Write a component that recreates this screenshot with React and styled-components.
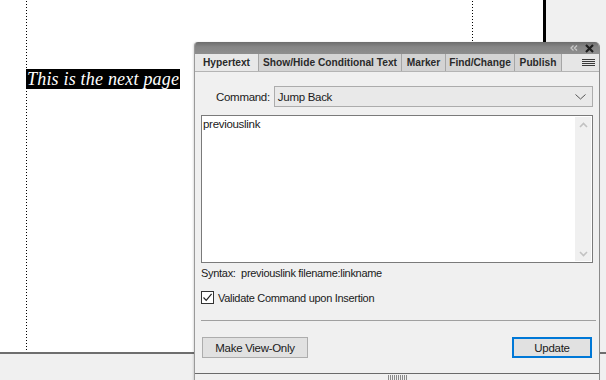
import React from "react";
import styled, { createGlobalStyle } from "styled-components";

const Global = createGlobalStyle`
  html, body { margin: 0; padding: 0; background: #f0f0f0; }
  body { width: 606px; height: 380px; overflow: hidden; }
`;

const Workspace = styled.div`
  position: relative;
  width: 606px;
  height: 380px;
  overflow: hidden;
  display: grid;
  grid-template-rows: 352px 2px 1fr;
  background: #efefef;
`;

const CanvasRow = styled.div`
  display: grid;
  grid-template-columns: 543px 3px 1fr;
`;

const Page = styled.div`
  background: #fff;
  display: grid;
  grid-template-columns: 26px 446px 1fr;
`;

const Guide = styled.div`
  background-image: ${(p) =>
    p.$dotted
      ? "linear-gradient(to bottom, #000 1px, transparent 1px)"
      : "none"};
  background-size: 1px 3px;
  background-repeat: repeat-y;
  background-position: 0 1px;
  padding-top: ${(p) => p.$top || 0}px;
`;

const Selected = styled.span`
  display: inline-block;
  background: #000;
  color: #fff;
  font-family: "Liberation Serif", "DejaVu Serif", serif;
  font-style: italic;
  font-size: 18px;
  line-height: 20px;
  height: 20px;
  padding: 0 1px 0 1px;
  letter-spacing: 0.2px;
`;

const PageEdge = styled.div`
  background: #000;
`;

const Pasteboard = styled.div`
  background: #f0f0f0;
`;

const BottomRule = styled.div`
  background: #6e6e6e;
`;

const Panel = styled.div`
  position: absolute;
  left: 194px;
  top: 42px;
  width: 406px;
  height: 346px;
  box-sizing: border-box;
  border-left: 1px solid #9a9a9a;
  border-right: 1px solid #8a8a8a;
  border-radius: 4px 5px 0 0;
  background: #f0f0f0;
  display: flex;
  flex-direction: column;
  font-family: "Liberation Sans", Arial, sans-serif;
  box-shadow: -1px 0 2px rgba(0,0,0,0.12);
  overflow: hidden;
`;

const TitleBar = styled.div`
  height: 12px;
  flex: none;
  background: linear-gradient(to bottom, #6c6c6c, #858585 40%, #8e8e8e);
  display: flex;
  justify-content: flex-end;
  align-items: center;
  gap: 7px;
  padding-right: 5px;
`;

const TabBar = styled.div`
  height: 18px;
  flex: none;
  display: flex;
  background: #e4e4e4;
  border-bottom: 1px solid #b4b4b4;
  box-sizing: border-box;
`;

const Tab = styled.div`
  width: ${(p) => p.$w}px;
  flex: none;
  box-sizing: border-box;
  display: flex;
  align-items: center;
  justify-content: center;
  font-size: 10.2px;
  font-weight: bold;
  color: #2a2a2a;
  background: ${(p) => (p.$active ? "#e8e8e8" : "#d3d3d3")};
  border-right: 1px solid #a6a6a6;
  white-space: nowrap;
`;

const TabFill = styled.div`
  flex: 1;
  display: flex;
  justify-content: flex-end;
  align-items: center;
  padding-right: 4px;
  background: #e6e6e6;
`;

const Body = styled.div`
  flex: 1;
  display: flex;
  flex-direction: column;
  padding: 14px 6px 0 6px;
  font-size: 11px;
  color: #1a1a1a;
  letter-spacing: -0.3px;
`;

const CommandRow = styled.div`
  display: flex;
  align-items: center;
  gap: 4px;
  padding-left: 15px;
  height: 21px;
`;

const Label = styled.span`
  font-size: 11.5px;
`;

const Select = styled.div`
  flex: 1;
  height: 21px;
  box-sizing: border-box;
  border: 1px solid #acacac;
  background: #e9e9e9;
  display: flex;
  align-items: center;
  justify-content: space-between;
  padding: 0 6px 0 3px;
  font-size: 11.5px;
`;

const TextArea = styled.div`
  margin-top: 8px;
  height: 148px;
  box-sizing: border-box;
  border: 1px solid #7a7a7a;
  background: #fff;
  display: flex;
`;

const TextContent = styled.div`
  flex: 1;
  padding: 2px 1px;
  font-size: 11.5px;
`;

const Scrollbar = styled.div`
  width: 16px;
  margin: 1px 1px 1px 0;
  background: #f0f0f0;
  display: flex;
  flex-direction: column;
  justify-content: space-between;
  align-items: center;
  padding: 5px 0 4px;
`;

const Syntax = styled.div`
  margin-top: 3px;
  font-size: 11px;
  line-height: 14px;
  white-space: pre;
`;

const CheckRow = styled.label`
  margin-top: 11px;
  display: flex;
  align-items: center;
  gap: 4px;
  font-size: 11px;
`;

const Box = styled.span`
  width: 13px;
  height: 13px;
  box-sizing: border-box;
  border: 1px solid #333;
  background: #fff;
  display: flex;
  align-items: center;
  justify-content: center;
`;

const Separator = styled.div`
  margin-top: 16px;
  height: 1px;
  background: #a0a0a0;
  margin-right: -3px;
`;

const ButtonRow = styled.div`
  margin-top: 16px;
  display: flex;
  justify-content: space-between;
  padding: 0 1px;
`;

const Button = styled.div`
  width: ${(p) => p.$w}px;
  height: 21px;
  box-sizing: border-box;
  border: ${(p) => (p.$default ? "2px solid #0078d7" : "1px solid #adadad")};
  background: #e1e1e1;
  display: flex;
  align-items: center;
  justify-content: center;
  font-size: 11.5px;
`;

const Footer = styled.div`
  margin-top: auto;
  flex: none;
  height: 13px;
  border-top: 1px solid #6a6a6a;
  margin-left: -7px;
  margin-right: -7px;
  display: flex;
  justify-content: center;
  padding-top: 1px;
`;

const Grip = styled.div`
  width: 19px;
  height: 5px;
  background-image: linear-gradient(to right, #8a8a8a 1px, transparent 1px);
  background-size: 2px 5px;
`;

const Chevrons = () => (
  <svg width="8" height="6" viewBox="0 0 8 6">
    <path d="M3.5 0.5 L1 3 L3.5 5.5 M7 0.5 L4.5 3 L7 5.5" fill="none" stroke="#c8c8c8" strokeWidth="1.3" />
  </svg>
);

const CloseX = () => (
  <svg width="9" height="9" viewBox="0 0 9 9">
    <path d="M1 1 L8 8 M8 1 L1 8" stroke="#1e1e1e" strokeWidth="2.2" />
  </svg>
);

const MenuIcon = () => (
  <svg width="13" height="8" viewBox="0 0 13 8">
    <path d="M0 0.5 H13 M0 2.5 H13 M0 4.5 H13 M0 6.5 H13" stroke="#3a3a3a" strokeWidth="1" />
  </svg>
);

const Down = ({ color = "#555", w = 11, h = 6 }) => (
  <svg width={w} height={h} viewBox="0 0 11 6">
    <path d="M0.5 0.5 L5.5 5 L10.5 0.5" fill="none" stroke={color} strokeWidth="1" />
  </svg>
);

const ScrollArrow = ({ up }) => (
  <svg width="9" height="6" viewBox="0 0 9 6">
    <path
      d={up ? "M1 5 L4.5 1.5 L8 5" : "M1 1 L4.5 4.5 L8 1"}
      fill="none"
      stroke="#c2c2c2"
      strokeWidth="1.6"
    />
  </svg>
);

const Check = () => (
  <svg width="11" height="11" viewBox="0 0 11 11">
    <path d="M1.5 5.5 L4.2 8.3 L9.6 1.8" fill="none" stroke="#222" strokeWidth="1.2" />
  </svg>
);

export default function App() {
  return (
    <>
      <Global />
      <Workspace>
        <CanvasRow>
          <Page>
            <Guide />
            <Guide $dotted $top={69}>
              <Selected>This is the next page</Selected>
            </Guide>
            <Guide $dotted />
          </Page>
          <PageEdge />
          <Pasteboard />
        </CanvasRow>
        <BottomRule />
        <Pasteboard />

        <Panel>
          <TitleBar>
            <Chevrons />
            <CloseX />
          </TitleBar>
          <TabBar>
            <Tab $active $w={64}>Hypertext</Tab>
            <Tab $w={143}>Show/Hide Conditional Text</Tab>
            <Tab $w={44}>Marker</Tab>
            <Tab $w={69}>Find/Change</Tab>
            <Tab $w={47}>Publish</Tab>
            <TabFill>
              <MenuIcon />
            </TabFill>
          </TabBar>
          <Body>
            <CommandRow>
              <Label>Command:</Label>
              <Select>
                <span>Jump Back</span>
                <Down />
              </Select>
            </CommandRow>
            <TextArea>
              <TextContent>previouslink</TextContent>
              <Scrollbar>
                <ScrollArrow up />
                <ScrollArrow />
              </Scrollbar>
            </TextArea>
            <Syntax>Syntax:  previouslink filename:linkname</Syntax>
            <CheckRow>
              <Box>
                <Check />
              </Box>
              <span>Validate Command upon Insertion</span>
            </CheckRow>
            <Separator />
            <ButtonRow>
              <Button $w={106}>Make View-Only</Button>
              <Button $w={80} $default>Update</Button>
            </ButtonRow>
            <Footer>
              <Grip />
            </Footer>
          </Body>
        </Panel>
      </Workspace>
    </>
  );
}
